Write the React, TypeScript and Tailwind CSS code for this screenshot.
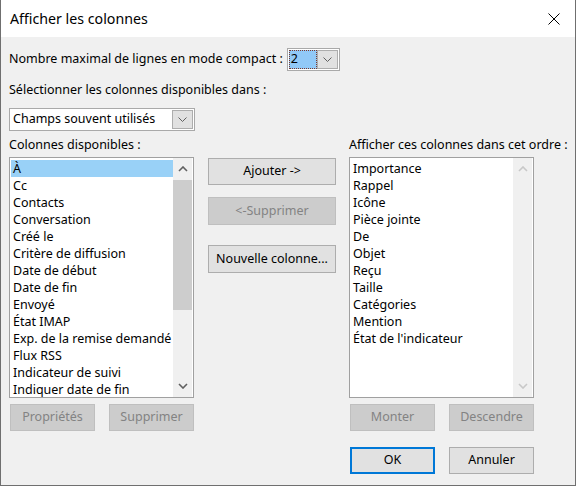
import React from 'react';

const leftItems = [
  'À',
  'Cc',
  'Contacts',
  'Conversation',
  'Créé le',
  'Critère de diffusion',
  'Date de début',
  'Date de fin',
  'Envoyé',
  'État IMAP',
  'Exp. de la remise demandé',
  'Flux RSS',
  'Indicateur de suivi',
  'Indiquer date de fin',
];

const rightItems = [
  'Importance',
  'Rappel',
  'Icône',
  'Pièce jointe',
  'De',
  'Objet',
  'Reçu',
  'Taille',
  'Catégories',
  'Mention',
  "État de l'indicateur",
];

function SmallChevron() {
  return (
    <svg width="9" height="5" viewBox="0 0 9 5" fill="none">
      <path d="M0.5 0.5 L4.5 4.5 L8.5 0.5" stroke="#606060" strokeWidth="1" />
    </svg>
  );
}

function ScrollArrow(props: { up?: boolean; disabled?: boolean }) {
  const color = props.disabled ? '#c8c8c8' : '#606060';
  return (
    <svg width="10" height="6" viewBox="0 0 10 6" fill="none">
      <path
        d={props.up ? 'M1 5 L5 1 L9 5' : 'M1 1 L5 5 L9 1'}
        stroke={color}
        strokeWidth="1.6"
      />
    </svg>
  );
}

function Button(props: { label: string; disabled?: boolean; primary?: boolean; className?: string }) {
  let cls = 'flex items-center justify-center whitespace-nowrap ';
  if (props.disabled) {
    cls += 'bg-[#cccccc] border border-[#bfbfbf] text-[#838383]';
  } else if (props.primary) {
    cls += 'bg-[#e1e1e1] border-2 border-[#0078d7] text-black';
  } else {
    cls += 'bg-[#e1e1e1] border border-[#adadad] text-black';
  }
  return <div className={cls + ' ' + (props.className || '')}>{props.label}</div>;
}

function ListBox(props: { items: string[]; selected?: number; disabledScroll?: boolean }) {
  return (
    <div className="h-[241px] border border-[#a0a0a0] bg-white flex">
      <div className="flex-1 pl-[1px] pt-[2px] overflow-hidden">
        {props.items.map(function (item, i) {
          const sel = i === props.selected;
          return (
            <div
              key={item}
              className={
                'h-[17px] leading-[17px] pl-[2px] whitespace-nowrap overflow-hidden ' +
                (sel ? 'bg-[#99d1f7]' : '')
              }
            >
              {item}
            </div>
          );
        })}
      </div>
      <div className="w-[19px] mr-[1px] bg-[#f0f0f0] flex flex-col">
        <div className="h-[22px] flex items-center justify-center">
          <ScrollArrow up disabled={props.disabledScroll} />
        </div>
        <div className="flex-1 flex flex-col">
          {props.disabledScroll ? null : <div className="h-[130px] bg-[#cdcdcd]" />}
        </div>
        <div className="h-[22px] flex items-center justify-center">
          <ScrollArrow disabled={props.disabledScroll} />
        </div>
      </div>
    </div>
  );
}

export default function App() {
  return (
    <div className="w-[576px] h-[486px] flex flex-col border-l border-r border-b border-[#6f6f6f] bg-[#f0f0f0] text-black font-['Noto_Sans',sans-serif] text-[12.5px]">
      <div className="h-[37px] bg-white flex items-center justify-between pl-[9px] pr-[15px]">
        <span className="text-[14.2px]">Afficher les colonnes</span>
        <svg width="12" height="12" viewBox="0 0 12 12">
          <path d="M0.5 0.5 L11.5 11.5 M11.5 0.5 L0.5 11.5" stroke="#000" strokeWidth="1" />
        </svg>
      </div>

      <div className="px-[7px] flex flex-col">
        <div className="mt-[11px] flex items-center">
          <span className="pl-[1px] whitespace-nowrap">Nombre maximal de lignes en mode compact :</span>
          <div className="ml-[4px] w-[53px] h-[23px] border border-[#a9a9a9] bg-white flex p-[1px]">
            <div className="w-[28px] bg-[#91c9f7] border border-dotted border-[#7a3b2e] flex items-center leading-none pl-[1px]">
              2
            </div>
            <div className="flex-1 bg-[#e1e1e1] border border-[#adadad] flex items-center justify-center">
              <SmallChevron />
            </div>
          </div>
        </div>

        <div className="mt-[11px] h-[16px] leading-[16px] pl-[1px]">Sélectionner les colonnes disponibles dans :</div>

        <div className="mt-[10px] w-[186px] h-[23px] border border-[#a9a9a9] bg-white flex items-stretch ml-[1px]">
          <div className="flex-1 flex items-center pl-[3px] whitespace-nowrap">Champs souvent utilisés</div>
          <div className="w-[21px] my-[1px] mr-[1px] bg-[#e1e1e1] border border-[#adadad] flex items-center justify-center">
            <SmallChevron />
          </div>
        </div>

        <div className="mt-[6px] flex pl-[1px]">
          <div className="w-[185px] flex flex-col">
            <div className="h-[16px] leading-[16px] whitespace-nowrap">Colonnes disponibles :</div>
            <div className="mt-[4px]">
              <ListBox items={leftItems} selected={0} />
            </div>
            <div className="mt-[6px] flex justify-between pl-[1px]">
              <Button label="Propriétés" disabled className="w-[85px] h-[27px]" />
              <Button label="Supprimer" disabled className="w-[85px] h-[27px]" />
            </div>
          </div>

          <div className="ml-[14px] w-[128px] pt-[21px] flex flex-col">
            <Button label="Ajouter ->" className="h-[27px]" />
            <Button label="<-Supprimer" disabled className="mt-[12px] h-[28px]" />
            <Button label="Nouvelle colonne..." className="mt-[20px] h-[28px]" />
          </div>

          <div className="ml-[13px] w-[185px] flex flex-col">
            <div className="h-[16px] leading-[16px] whitespace-nowrap">Afficher ces colonnes dans cet ordre :</div>
            <div className="mt-[4px]">
              <ListBox items={rightItems} disabledScroll />
            </div>
            <div className="mt-[6px] flex justify-between pl-[1px]">
              <Button label="Monter" disabled className="w-[85px] h-[27px]" />
              <Button label="Descendre" disabled className="w-[85px] h-[27px]" />
            </div>
            <div className="mt-[16px] flex justify-between pl-[1px]">
              <Button label="OK" primary className="w-[85px] h-[27px]" />
              <Button label="Annuler" className="w-[85px] h-[27px]" />
            </div>
          </div>
        </div>
      </div>
    </div>
  );
}
